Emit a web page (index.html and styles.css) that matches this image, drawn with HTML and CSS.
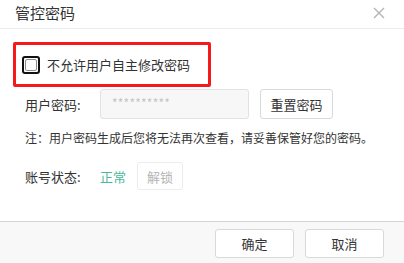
FILE: index.html
```html
<!DOCTYPE html>
<html lang="zh-CN">
<head>
<meta charset="utf-8">
<link rel="stylesheet" href="styles.css">
</head>
<body>
<div class="dialog">
  <div class="header">
    <span class="title">管控密码</span>
    <span class="close">
      <svg width="12" height="12" viewBox="0 0 12 12"><path d="M1 1L11 11M11 1L1 11" stroke="#b4b4b4" stroke-width="1.4" fill="none"/></svg>
    </span>
  </div>
  <div class="content">
    <div class="highlight">
      <span class="checkbox"><span class="checkbox-inner"></span></span>
      <span class="check-label">不允许用户自主修改密码</span>
    </div>
    <div class="row row-pwd">
      <span class="label">用户密码:</span>
      <div class="input">**********</div>
      <button class="btn btn-reset">重置密码</button>
    </div>
    <div class="note">注：用户密码生成后您将无法再次查看，请妥善保管好您的密码。</div>
    <div class="row row-status">
      <span class="label">账号状态:</span>
      <span class="status">正常</span>
      <button class="btn btn-unlock">解锁</button>
    </div>
  </div>
  <div class="footer">
    <button class="btn btn-foot">确定</button>
    <button class="btn btn-foot">取消</button>
  </div>
</div>
</body>
</html>
```
FILE: styles.css
```css
* { box-sizing: border-box; }
html, body { margin: 0; padding: 0; background: #fff; }
body {
  font-family: "Noto Sans CJK SC", "Liberation Sans", sans-serif;
  color: #333;
  font-size: 13px;
}
.dialog {
  width: 404px;
  height: 263px;
  display: flex;
  flex-direction: column;
}
.header {
  height: 29px;
  border-bottom: 1px solid #ececec;
  display: flex;
  align-items: center;
  justify-content: space-between;
  padding: 0 19px 3px 15px;
}
.title { font-size: 15px; color: #333; line-height: 20px; }
.close { display: flex; width: 12px; height: 12px; }
.content {
  flex: 1;
  padding: 13px 0 0 13px;
}
.highlight {
  width: 198px;
  height: 45px;
  border: 3px solid #f5191c;
  border-radius: 2px;
  display: flex;
  align-items: center;
  padding-left: 6px;
}
.checkbox {
  width: 18px;
  height: 18px;
  border: 2px solid #111;
  border-radius: 3px;
  padding: 1px;
  display: flex;
}
.checkbox-inner {
  flex: 1;
  border: 1px solid #8a8a8a;
  border-radius: 2px;
}
.check-label {
  margin-left: 7px;
  font-size: 13px;
  color: #333;
}
.row {
  display: flex;
  align-items: center;
  padding-left: 12px;
}
.row-pwd { margin-top: 2px; height: 30px; }
.label { width: 75px; font-size: 13px; color: #333; }
.input {
  width: 149px;
  height: 30px;
  border: 1px solid #e2e2e2;
  border-radius: 3px;
  background: #f7f7f7;
  color: #c4c4c4;
  font-size: 12px;
  line-height: 26px;
  padding-left: 11px;
  letter-spacing: 0.2px;
}
.btn {
  font-family: inherit;
  background: #fff;
  border: 1px solid #d9d9d9;
  border-radius: 3px;
  color: #333;
  font-size: 13px;
  padding: 0;
  cursor: pointer;
}
.btn-reset { width: 73px; height: 30px; margin-left: 11px; }
.note {
  margin-top: 10px;
  padding-left: 12px;
  font-size: 12px;
  color: #333;
  line-height: 17px;
}
.row-status { margin-top: 16px; height: 28px; }
.status { color: #4db89c; width: 37px; }
.btn-unlock {
  width: 46px;
  height: 28px;
  border-color: #ececec;
  color: #b5b5b5;
}
.footer {
  height: 42px;
  border-top: 1px solid #d4d4d4;
  background: #f8f8f8;
  display: flex;
  justify-content: flex-end;
  align-items: flex-start;
  padding: 7px 20px 0 0;
  gap: 11px;
}
.btn-foot { width: 79px; height: 29px; }
```
